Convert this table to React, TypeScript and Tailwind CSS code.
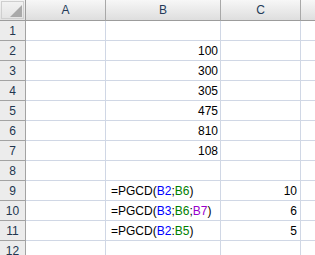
import type { ReactNode } from 'react'

type Cell = { b?: ReactNode; c?: ReactNode }

const ref = (name: string, color: string) => <span className={color}>{name}</span>

// sheet contents by row number (1-based)
const rows: Record<number, Cell> = {
  2: { b: '100' },
  3: { b: '300' },
  4: { b: '305' },
  5: { b: '475' },
  6: { b: '810' },
  7: { b: '108' },
  9: {
    b: (
      <>
        =PGCD({ref('B2', 'text-[#0000ff]')};{ref('B6', 'text-[#008000]')})
      </>
    ),
    c: '10',
  },
  10: {
    b: (
      <>
        =PGCD({ref('B3', 'text-[#0000ff]')};{ref('B6', 'text-[#008000]')};{ref('B7', 'text-[#9900cc]')})
      </>
    ),
    c: '6',
  },
  11: {
    b: (
      <>
        =PGCD({ref('B2', 'text-[#0000ff]')}:{ref('B5', 'text-[#008000]')})
      </>
    ),
    c: '5',
  },
}

const isFormula = (n: number) => n >= 9

function ColHeader({ label, last }: { label?: string; last?: boolean }) {
  return (
    <div
      className={
        'h-[21px] flex items-center justify-center border-b border-[#9c9c9c] bg-gradient-to-b from-[#f7f7f7] to-[#dedede] text-[#233a58] ' +
        (last ? '' : 'border-r border-r-[#a8a8a8]')
      }
    >
      {label}
    </div>
  )
}

export default function App() {
  const nums = Array.from({ length: 12 }, (_, i) => i + 1)

  return (
    <div
      className="w-[315px] h-[255px] overflow-hidden bg-white text-[12px] text-black"
      style={{ fontFamily: '"Liberation Sans", Arial, sans-serif' }}
    >
      <div className="grid grid-cols-[26px_80px_115px_80px_1fr]">
        {/* corner select-all box */}
        <div className="relative h-[21px] border-r border-b border-[#9c9c9c] bg-gradient-to-b from-[#f4f4f4] to-[#e2e2e2]">
          <svg className="absolute left-0 top-0" width="25" height="20" viewBox="0 0 25 20">
            <rect x="1.5" y="1.5" width="22" height="17" fill="none" stroke="#cfcfcf" />
            <polygon points="22,5 22,17 10,17" fill="#a9a9a9" />
          </svg>
        </div>
        <ColHeader label="A" />
        <ColHeader label="B" />
        <ColHeader label="C" />
        <ColHeader last />

        {nums.map((n) => {
          const row = rows[n] ?? {}
          return (
            <div key={n} className="contents">
              <div className="h-[20px] flex items-center justify-center pt-[1px] bg-[#ececec] border-r border-b border-[#a3a3a3] text-[#22364f]">
                {n}
              </div>
              <div className="h-[20px] border-r border-b border-[#d0d7e5]" />
              <div
                className={
                  'h-[20px] flex items-center pt-[1px] border-r border-b border-[#d0d7e5] whitespace-nowrap ' +
                  (isFormula(n) ? 'justify-start pl-[5px]' : 'justify-end pr-[2px]')
                }
              >
                {row.b}
              </div>
              <div className="h-[20px] flex items-center justify-end pt-[1px] pr-[3px] border-r border-b border-[#d0d7e5]">
                {row.c}
              </div>
              <div className="h-[20px] border-b border-[#d0d7e5]" />
            </div>
          )
        })}
      </div>
    </div>
  )
}
